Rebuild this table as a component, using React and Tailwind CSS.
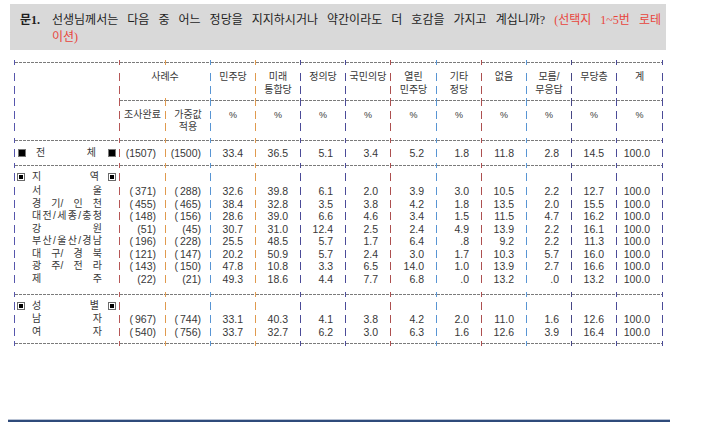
import React from "react";

/// column widths + separator colours (x: 14,119,165,210,...,616 / end 662)
const COLS = [
  { w: "w-[105px]", c: "bg-[#5656ac]" },
  { w: "w-[46px]", c: "bg-[#b65656]" },
  { w: "w-[45px]", c: "bg-[#e09a4e]" },
  { w: "w-[45px]", c: "bg-[#5895d4]" },
  { w: "w-[45px]", c: "bg-[#e09a4e]" },
  { w: "w-[45px]", c: "bg-[#4b4b98]" },
  { w: "w-[45px]", c: "bg-[#4b4b98]" },
  { w: "w-[46px]", c: "bg-[#ad4f4f]" },
  { w: "w-[45px]", c: "bg-[#5895d4]" },
  { w: "w-[45px]", c: "bg-[#ad4f4f]" },
  { w: "w-[45px]", c: "bg-[#5895d4]" },
  { w: "w-[45px]", c: "bg-[#474786]" },
  { w: "w-[46px]", c: "bg-[#4b4b98]" },
];
const END = "bg-[#4b4b98]";
const HDASH =
  "bg-[repeating-linear-gradient(to_right,#7b7b7b_0_3px,transparent_3px_4px)]";

const H1 = ["민주당", "미래", "정의당", "국민의당", "열린", "기타", "없음", "모름/", "무당층", "계"];
const H2 = ["", "통합당", "", "", "민주당", "정당", "", "무응답", "", ""];

const TOTAL = ["(1507)", "(1500)", "33.4", "36.5", "5.1", "3.4", "5.2", "1.8", "11.8", "2.8", "14.5", "100.0"];

const REGION = [
  { l: ["서", "울"], v: ["(371)", "(288)", "32.6", "39.8", "6.1", "2.0", "3.9", "3.0", "10.5", "2.2", "12.7", "100.0"] },
  { l: ["경", "기/", "인", "천"], v: ["(455)", "(465)", "38.4", "32.8", "3.5", "3.8", "4.2", "1.8", "13.5", "2.0", "15.5", "100.0"] },
  { l: ["대", "전", "/", "세", "종", "/", "충", "청"], v: ["(148)", "(156)", "28.6", "39.0", "6.6", "4.6", "3.4", "1.5", "11.5", "4.7", "16.2", "100.0"] },
  { l: ["강", "원"], v: ["(51)", "(45)", "30.7", "31.0", "12.4", "2.5", "2.4", "4.9", "13.9", "2.2", "16.1", "100.0"] },
  { l: ["부", "산", "/", "울", "산", "/", "경", "남"], v: ["(196)", "(228)", "25.5", "48.5", "5.7", "1.7", "6.4", ".8", "9.2", "2.2", "11.3", "100.0"] },
  { l: ["대", "구/", "경", "북"], v: ["(121)", "(147)", "20.2", "50.9", "5.7", "2.4", "3.0", "1.7", "10.3", "5.7", "16.0", "100.0"] },
  { l: ["광", "주/", "전", "라"], v: ["(143)", "(150)", "47.8", "10.8", "3.3", "6.5", "14.0", "1.0", "13.9", "2.7", "16.6", "100.0"] },
  { l: ["제", "주"], v: ["(22)", "(21)", "49.3", "18.6", "4.4", "7.7", "6.8", ".0", "13.2", ".0", "13.2", "100.0"] },
];

const GENDER = [
  { l: ["남", "자"], v: ["(967)", "(744)", "33.1", "40.3", "4.1", "3.8", "4.2", "2.0", "11.0", "1.6", "12.6", "100.0"] },
  { l: ["여", "자"], v: ["(540)", "(756)", "33.7", "32.7", "6.2", "3.0", "6.3", "1.6", "12.6", "3.9", "16.4", "100.0"] },
];

function Dash({ c }) {
  return <span className={`w-px h-[8px] mt-[2px] shrink-0 ${c}`} />;
}

function Cell({ i, children, className = "" }) {
  const col = COLS[i];
  return (
    <div className={`${col.w} flex shrink-0`}>
      <Dash c={col.c} />
      <div className={`flex-1 min-w-0 ${className}`}>{children}</div>
    </div>
  );
}

function Line({ children }) {
  return (
    <div className="flex h-[12.5px] leading-[12.5px]">
      {children}
      <Dash c={END} />
    </div>
  );
}

function Rule() {
  return (
    <div className="flex items-center h-[5px]">
      {COLS.map((c, k) => (
        <div key={k} className={`${c.w} flex items-center shrink-0`}>
          <span className={`w-px h-[5px] ${c.c}`} />
          <span className={`flex-1 h-px ${HDASH}`} />
        </div>
      ))}
      <span className={`w-px h-[5px] ${END}`} />
    </div>
  );
}

function Count({ v }) {
  const digits = v.slice(1, -1);
  if (digits.length === 3) {
    return (
      <>
        (<span className="ml-[2px]">{digits}</span>)
      </>
    );
  }
  return v;
}

function Values({ v }) {
  return v.map((x, k) => (
    <Cell key={k} i={k + 1} className={`text-right ${k < 2 ? "pr-[9px]" : "pr-[12px]"}`}>
      {k < 2 ? <Count v={x} /> : x}
    </Cell>
  ));
}

function Filled() {
  return <span className="w-[8px] h-[8px] shrink-0 bg-black border border-[#777]" />;
}

function Boxed() {
  return (
    <span className="w-[8px] h-[8px] shrink-0 border border-[#6a6a6a] bg-white flex items-center justify-center">
      <span className="w-[4px] h-[4px] bg-black" />
    </span>
  );
}

function SectionLine({ a, b }) {
  return (
    <Line>
      <Cell i={0}>
        <div className="flex items-center h-full ml-[2px] text-[10px]">
          <Boxed />
          <div className="ml-[7px] w-[67px] flex justify-between">
            <span>{a}</span>
            <span>{b}</span>
          </div>
          <span className="ml-[9px]">
            <Boxed />
          </span>
        </div>
      </Cell>
      {COLS.slice(1).map((_, k) => (
        <Cell key={k} i={k + 1} />
      ))}
    </Line>
  );
}

function DataLine({ l, v }) {
  return (
    <Line>
      <Cell i={0}>
        <div className="ml-[17px] w-[70px] flex justify-between text-[10px]">
          {l.map((t, k) => (
            <span key={k}>{t}</span>
          ))}
        </div>
      </Cell>
      <Values v={v} />
    </Line>
  );
}

function Header() {
  return (
    <div className="pt-[6px] text-[10px]">
      <Line>
        <Cell i={0} />
        <div className="w-[91px] flex shrink-0">
          <Dash c={COLS[1].c} />
          <div className="flex-1 text-center">사례수</div>
        </div>
        {H1.map((t, k) => (
          <Cell key={k} i={k + 3} className="text-center">
            {t}
          </Cell>
        ))}
      </Line>
      <Line>
        <Cell i={0} />
        <div className="w-[91px] flex shrink-0">
          <Dash c={COLS[1].c} />
        </div>
        {H2.map((t, k) => (
          <Cell key={k} i={k + 3} className="text-center">
            {t}
          </Cell>
        ))}
      </Line>
      {/* inner rule under 사례수 ... 계 */}
      <Line>
        <Cell i={0} />
        {COLS.slice(1).map((c, k) => (
          <div key={k} className={`${c.w} flex shrink-0`}>
            <Dash c={c.c} />
            <span className={`flex-1 h-px mt-[4px] ${HDASH}`} />
          </div>
        ))}
      </Line>
      <Line>
        <Cell i={0} />
        <Cell i={1} className="text-center">
          조사완료
        </Cell>
        <Cell i={2} className="text-center">
          가중값
        </Cell>
        {H1.map((_, k) => (
          <Cell key={k} i={k + 3} className="text-center text-[9px]">
            %
          </Cell>
        ))}
      </Line>
      <Line>
        <Cell i={0} />
        <Cell i={1} />
        <Cell i={2} className="text-center">
          적용
        </Cell>
        {H1.map((_, k) => (
          <Cell key={k} i={k + 3} />
        ))}
      </Line>
    </div>
  );
}

export default function App() {
  return (
    <div className="w-[707px] h-[423px] bg-white overflow-hidden pt-[4px] font-['Liberation_Sans','Noto_Sans_CJK_KR',sans-serif]">
      {/* question box */}
      <div className="ml-[10px] w-[656px] bg-[#d9d9d9] pt-[7.5px] pb-[4.5px] pl-[10px] pr-[5px] flex text-[12px] leading-[17px] text-[#1e1e1e] font-['Liberation_Serif','Noto_Sans_CJK_KR',serif]">
        <div className="w-[32px] shrink-0 font-bold">문1.</div>
        <div className="flex-1">
          <div className="text-justify [text-align-last:justify]">
            선생님께서는 다음 중 어느 정당을 지지하시거나 약간이라도 더 호감을 가지고 계십니까?{" "}
            <span className="text-[#e8453c]">(선택지 1~5번 로테</span>
          </div>
          <div className="text-[#e8453c]">이션)</div>
        </div>
      </div>

      {/* cross table */}
      <div className="ml-[14px] mt-[10px] text-[10.5px] text-[#383838]">
        <Rule />
        <Header />
        <div className="h-[4.5px]" />
        <Rule />
        <div className="pt-[3.75px] pb-[3.75px]">
          <Line>
            <Cell i={0}>
              <div className="flex items-center h-full ml-[3px] text-[10px]">
                <Filled />
                <div className="ml-[10px] w-[60px] flex justify-between">
                  <span>전</span>
                  <span>체</span>
                </div>
                <span className="ml-[12px] flex">
                  <Filled />
                </span>
              </div>
            </Cell>
            <Values v={TOTAL} />
          </Line>
        </div>
        <Rule />
        <div className="pt-[2.5px] pb-[7px]">
          <SectionLine a="지" b="역" />
          <div className="h-[2px]" />
          {REGION.map((r, k) => (
            <DataLine key={k} l={r.l} v={r.v} />
          ))}
        </div>
        <Rule />
        <div className="pt-[2.5px] pb-[3px]">
          <SectionLine a="성" b="별" />
          <div className="h-px" />
          {GENDER.map((r, k) => (
            <DataLine key={k} l={r.l} v={r.v} />
          ))}
        </div>
        <Rule />
      </div>

      {/* footer rule */}
      <div className="ml-[8px] w-[662px] mt-[73px]">
        <div className="h-px bg-[#b9c3d4]" />
        <div className="h-[2px] bg-[#2f4b7b]" />
      </div>
    </div>
  );
}
